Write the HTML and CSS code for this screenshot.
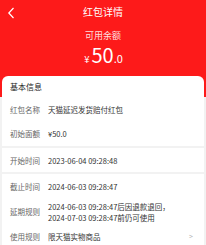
FILE: index.html
```html
<!DOCTYPE html>
<html lang="zh">
<head>
<meta charset="utf-8">
<link rel="stylesheet" href="styles.css">
</head>
<body>
<div class="header">
  <div class="nav">
    <svg class="back" width="8" height="12" viewBox="0 0 8 12"><path d="M6.5 1 L1.8 6 L6.5 11" fill="none" stroke="#fff" stroke-width="1.2"/></svg>
    <div class="title">红包详情</div>
  </div>
  <div class="label">可用余额</div>
  <div class="amount"><span class="yen">¥</span><span class="big">50</span><span class="dec">.0</span></div>
</div>
<div class="card">
  <div class="section first">
    <div class="sec-title">基本信息</div>
    <div class="row"><span class="k">红包名称</span><span class="v">天猫延迟发货赔付红包</span></div>
    <div class="row"><span class="k">初始面额</span><span class="v">¥50.0</span></div>
  </div>
  <div class="section second">
    <div class="row"><span class="k">开始时间</span><span class="v">2023-06-04 09:28:48</span></div>
  </div>
  <div class="section">
    <div class="row"><span class="k">截止时间</span><span class="v">2024-06-03 09:28:47</span></div>
    <div class="row"><span class="k">延期规则</span><span class="v">2024-06-03 09:28:47后因退款退回，<br>2024-07-03 09:28:47前仍可使用</span></div>
    <div class="row"><span class="k">使用规则</span><span class="v">限天猫实物商品</span><span class="arrow">&gt;</span></div>
  </div>
</div>
</body>
</html>
```
FILE: styles.css
```css
html, body {
  margin: 0;
  padding: 0;
}
body {
  background: #f2f2f2;
  font-family: "Noto Sans CJK SC", "Noto Sans", sans-serif;
  width: 206px;
  height: 245px;
  overflow: hidden;
}
.header {
  background: #fd1a1a;
  height: 97px;
  color: #fff;
  display: flex;
  flex-direction: column;
  align-items: center;
}
.nav {
  position: relative;
  width: 100%;
  height: 24px;
  display: flex;
  align-items: center;
  justify-content: center;
}
.back {
  position: absolute;
  left: 7px;
  top: 7px;
}
.title {
  font-size: 10px;
  line-height: 14px;
}
.label {
  margin-top: 6px;
  font-size: 9px;
  line-height: 12px;
  color: rgba(255,255,255,0.88);
}
.amount {
  display: flex;
  align-items: baseline;
  line-height: 20px;
  margin-top: 3px;
  margin-left: 1px;
}
.yen {
  font-size: 9.5px;
  margin-right: 2px;
}
.big {
  font-size: 20px;
}
.dec {
  font-size: 11px;
}
.card {
  margin: -21px 2px 0;
  border-radius: 6px 6px 0 0;
  overflow: hidden;
  display: flex;
  flex-direction: column;
  gap: 2px;
}
.section {
  background: #fff;
  padding: 0 8px;
}
.sec-title {
  font-size: 8px;
  line-height: 11px;
  height: 21px;
  display: flex;
  align-items: center;
  color: #222;
}
.row {
  display: flex;
  align-items: center;
  font-size: 7.5px;
  line-height: 11px;
  height: 25px;
}
.section.first .row {
  height: 24.5px;
}
.section.second .row {
  height: 24px;
}
.k {
  color: #666;
  width: 38px;
  flex: none;
}
.v {
  color: #333;
  flex: 1;
}
.arrow {
  color: #b5b5b5;
  font-size: 7px;
  margin-right: 3px;
}
```
